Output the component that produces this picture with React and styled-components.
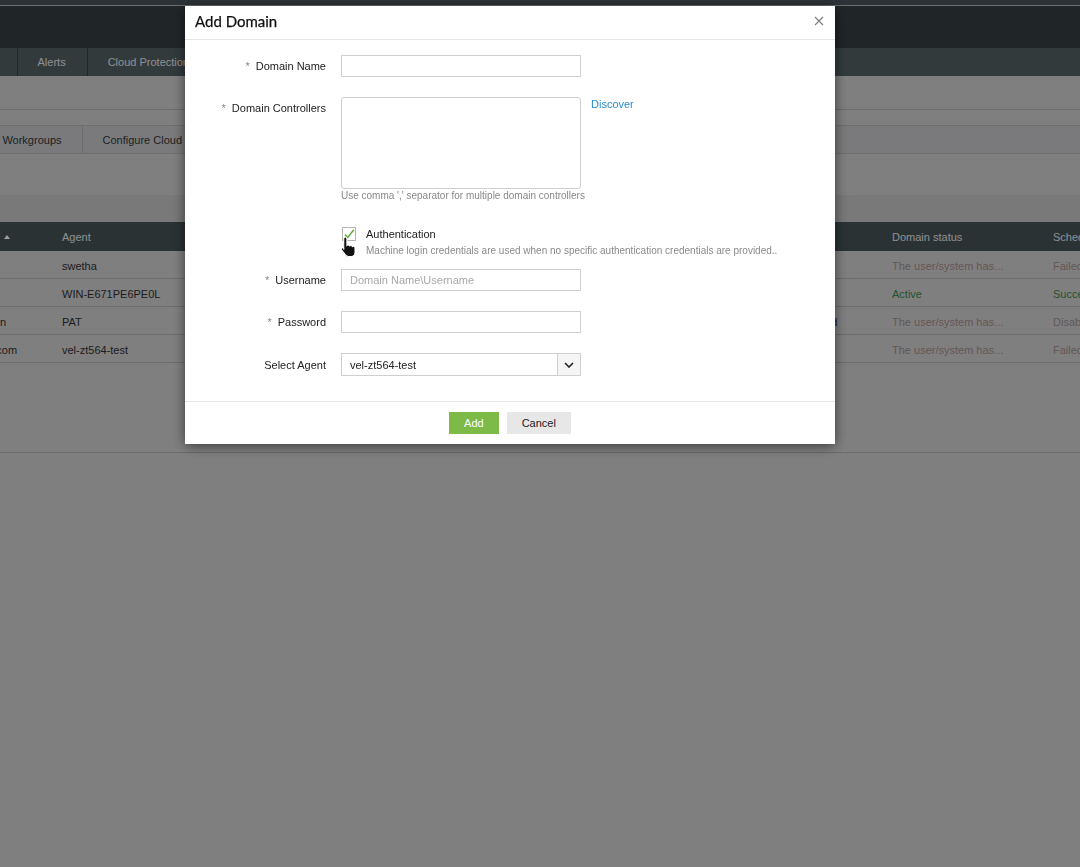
import React from 'react'
import styled, { createGlobalStyle } from 'styled-components'

const GlobalStyle = createGlobalStyle`
  html, body {
    margin: 0;
    padding: 0;
  }
  body {
    font-family: "Liberation Sans", Arial, sans-serif;
    font-size: 11px;
    color: #303030;
    background: #cecece;
    overflow: hidden;
  }
`

/* background page (scrolled sideways, so it starts off screen) */
const Page = styled.div`
  width: 1400px;
  margin-left: -130px;
  min-height: 867px;
  background: #cecece;
`
const TopStrip = styled.div`
  height: 5px;
  background: #495259;
  border-bottom: 1px solid #adb3b6;
`
const Header = styled.div`
  height: 42px;
  background: #353d42;
`
const TabBar = styled.div`
  display: flex;
  height: 28px;
  padding-left: 67px;
  background: #525e62;
`
const Tab = styled.div`
  display: flex;
  align-items: center;
  padding: 0 21px 0 20px;
  color: #e2e6e8;
  border-right: 1px solid #374145;
`
const TitleArea = styled.div`
  height: 33px;
  border-bottom: 1px solid #aeaeae;
`
const Spacer = styled.div`
  height: ${p => p.$h}px;
  background: ${p => p.$bg || 'transparent'};
`
const SubTabBar = styled.div`
  display: flex;
  height: 27px;
  padding-left: 28px;
  background: #c5c6c8;
  border-top: 1px solid #b4b4b4;
  border-bottom: 1px solid #b4b4b4;
`
const SubTab = styled.div`
  display: flex;
  align-items: center;
  padding: 0 20px;
  color: #30373a;
  border-right: 1px solid #aeaeae;
`
const Table = styled.div`
  display: grid;
  grid-template-columns: 180px 300px 190px 220px 120px 161px 160px;
`
const HeadCell = styled.div`
  display: flex;
  align-items: center;
  height: 29px;
  padding: 0 12px;
  background: #455155;
  color: #e2e6e8;
  white-space: nowrap;
  overflow: hidden;
`
const SortArrow = styled.span`
  margin-left: 11px;
  width: 0;
  height: 0;
  border-left: 3.5px solid transparent;
  border-right: 3.5px solid transparent;
  border-bottom: 4px solid #ffffff;
`
const Cell = styled.div`
  display: flex;
  align-items: center;
  height: 25px;
  padding: 2px 12px 0;
  border-bottom: 1px solid #aeaeae;
  white-space: nowrap;
  overflow: hidden;
  color: ${p => (p.$tone === 'warn' ? '#a08c8c' : p.$tone === 'ok' ? '#3a8553' : '#303030')};
`
const TableFooter = styled.div`
  height: 89px;
  border-bottom: 1px solid #aeaeae;
`

/* modal */
const Overlay = styled.div`
  position: fixed;
  inset: 0;
  background: rgba(0, 0, 0, 0.38);
`
const Dialog = styled.div`
  position: absolute;
  top: 6px;
  left: 185px;
  width: 650px;
  background: #fff;
  box-shadow: 0 2px 12px rgba(0, 0, 0, 0.55);
  color: #222;
`
const DialogHeader = styled.div`
  display: flex;
  align-items: center;
  justify-content: space-between;
  height: 30px;
  padding: 0 10px 3px;
  border-bottom: 1px solid #e6e6e6;
`
const DialogTitle = styled.div`
  font-family: Lato, "Liberation Sans", sans-serif;
  font-size: 15px;
  font-weight: 400;
  color: #111;
  -webkit-text-stroke: 0.25px #111;
`
const CloseButton = styled.button`
  display: flex;
  border: 0;
  padding: 0;
  margin-right: 1px;
  background: none;
  cursor: pointer;
`
const DialogBody = styled.div`
  padding: 15px 0 25px;
`
const FormRow = styled.div`
  display: flex;
  align-items: ${p => (p.$top ? 'flex-start' : 'center')};
  margin-bottom: ${p => p.$mb ?? 20}px;
`
const Label = styled.label`
  width: 141px;
  padding-right: 15px;
  padding-top: ${p => p.$pt || 0}px;
  text-align: right;
  line-height: 14px;
  color: #222;
`
const Star = styled.span`
  color: #888;
  margin-right: 6px;
`
const Control = styled.div`
  display: flex;
  flex-direction: column;
  width: 240px;
`
const TextInput = styled.input`
  box-sizing: border-box;
  width: 240px;
  height: 22px;
  padding: 0 8px;
  border: 1px solid #cfcfcf;
  font: inherit;
  color: #222;
  outline: none;
  &::placeholder {
    color: #a8a8a8;
  }
`
const TextArea = styled.textarea`
  box-sizing: border-box;
  width: 240px;
  height: 92px;
  border: 1px solid #cfcfcf;
  border-radius: 3px;
  resize: none;
  font: inherit;
  outline: none;
`
const Hint = styled.div`
  margin-top: 1px;
  font-size: 10px;
  line-height: 12px;
  white-space: nowrap;
  color: #888;
`
const Link = styled.a`
  margin-left: 10px;
  line-height: 14px;
  color: #2a8cd2;
  text-decoration: none;
`
const CheckWrap = styled.div`
  position: relative;
  display: flex;
  align-items: flex-start;
  margin-left: 1px;
`
const CheckBox = styled.div`
  box-sizing: border-box;
  width: 14px;
  height: 14px;
  border: 1px solid #b5b5b5;
  background: #fff;
`
const CheckText = styled.div`
  margin-left: 10px;
`
const CheckTitle = styled.div`
  line-height: 14px;
  color: #222;
`
const CheckSub = styled.div`
  margin-top: 4px;
  font-size: 10px;
  line-height: 12px;
  color: #8a8a8a;
`
const Cursor = styled.svg`
  position: absolute;
  left: -2px;
  top: 9px;
`
const Select = styled.div`
  box-sizing: border-box;
  display: flex;
  width: 240px;
  height: 23px;
  border: 1px solid #cfcfcf;
`
const SelectValue = styled.div`
  flex: 1;
  display: flex;
  align-items: center;
  padding-left: 8px;
  color: #222;
`
const SelectArrow = styled.div`
  display: flex;
  align-items: center;
  justify-content: center;
  width: 22px;
  border-left: 1px solid #cfcfcf;
  background: #f5f5f5;
`
const DialogFooter = styled.div`
  display: flex;
  justify-content: center;
  gap: 8px;
  padding: 10px;
  border-top: 1px solid #e6e6e6;
`
const Button = styled.button`
  height: 22px;
  padding: 0 15px;
  border: 0;
  font: inherit;
  color: ${p => (p.$primary ? '#fff' : '#222')};
  background: ${p => (p.$primary ? '#7dba48' : '#e7e7e7')};
  cursor: pointer;
`

const rows = [
  ['swetha.local', 'swetha', '2 hours ago', '60 Minutes', 'Failed', 'The user/system has...', 'Failed'],
  ['win-domain.local', 'WIN-E671PE6PE0L', '5 minutes ago', '60 Minutes', 'Success', 'Active', 'Success'],
  ['testlab.pat-admin-domain', 'PAT', '1 day ago', '60 Minutes', 'Unauthorized', 'The user/system has...', 'Disabled'],
  ['qa1-vel-zt564.zohotest.com', 'vel-zt564-test', '3 hours ago', '60 Minutes', 'Success', 'The user/system has...', 'Failed'],
]

function statusTone(text) {
  if (text === 'Active' || text === 'Success') return 'ok'
  if (text.startsWith('The user') || text === 'Failed' || text === 'Disabled') return 'warn'
  return undefined
}

export default function App() {
  return (
    <>
      <GlobalStyle />
      <Page>
        <TopStrip />
        <Header />
        <TabBar>
          <Tab>Reports</Tab>
          <Tab>Alerts</Tab>
          <Tab>Cloud Protection</Tab>
          <Tab>Admin</Tab>
        </TabBar>
        <TitleArea />
        <Spacer $h={15} />
        <SubTabBar>
          <SubTab>Domains</SubTab>
          <SubTab>Workgroups</SubTab>
          <SubTab>Configure Cloud Services</SubTab>
        </SubTabBar>
        <Spacer $h={41} />
        <Spacer $h={27} $bg="#c3c3c5" />
        <Table>
          <HeadCell>Domain / Forest Name<SortArrow /></HeadCell>
          <HeadCell>Agent</HeadCell>
          <HeadCell>Last Sync</HeadCell>
          <HeadCell>Interval</HeadCell>
          <HeadCell>Status</HeadCell>
          <HeadCell>Domain status</HeadCell>
          <HeadCell>Scheduler status</HeadCell>
          {rows.map((r, i) =>
            r.map((c, j) => (
              <Cell key={i + '-' + j} $tone={j >= 5 ? statusTone(c) : undefined}>{c}</Cell>
            ))
          )}
        </Table>
        <TableFooter />
      </Page>

      <Overlay>
        <Dialog>
          <DialogHeader>
            <DialogTitle>Add Domain</DialogTitle>
            <CloseButton aria-label="close">
              <svg width="10" height="10" viewBox="0 0 10 10">
                <path d="M1 1L9 9M9 1L1 9" stroke="#808080" strokeWidth="1.2" />
              </svg>
            </CloseButton>
          </DialogHeader>

          <DialogBody>
            <FormRow>
              <Label><Star>*</Star>Domain Name</Label>
              <TextInput />
            </FormRow>

            <FormRow $top $mb={25}>
              <Label $pt={4}><Star>*</Star>Domain Controllers</Label>
              <Control>
                <TextArea />
                <Hint>Use comma ',' separator for multiple domain controllers</Hint>
              </Control>
              <Link href="#">Discover</Link>
            </FormRow>

            <FormRow $top $mb={12}>
              <Label />
              <CheckWrap>
                <CheckBox>
                  <svg width="12" height="12" viewBox="0 0 12 12">
                    <path d="M2 6.5L4.8 9.4L10.8 1.8" fill="none" stroke="#5fae3e" strokeWidth="1.6" />
                  </svg>
                </CheckBox>
                <CheckText>
                  <CheckTitle>Authentication</CheckTitle>
                  <CheckSub>Machine login credentials are used when no specific authentication credentials are provided..</CheckSub>
                </CheckText>
                <Cursor width="18" height="21" viewBox="0 0 17 20">
                  <path
                    d="M5 1c.8 0 1.5.7 1.5 1.5V9c.3-.3.8-.5 1.3-.5.7 0 1.2.4 1.4.9.3-.3.7-.4 1.1-.4.7 0 1.3.5 1.4 1.1.3-.2.6-.3 1-.3.9 0 1.5.7 1.5 1.5V16c0 2-1.6 3.5-3.5 3.5H8c-1.2 0-2.2-.6-2.9-1.5L1.5 13.5c-.5-.6-.4-1.5.2-2 .6-.5 1.4-.4 1.9.1L3.5 13V2.5C3.5 1.7 4.2 1 5 1z"
                    fill="#111"
                    stroke="#fff"
                    strokeWidth="1"
                  />
                </Cursor>
              </CheckWrap>
            </FormRow>

            <FormRow>
              <Label><Star>*</Star>Username</Label>
              <TextInput placeholder="Domain Name\Username" />
            </FormRow>

            <FormRow>
              <Label><Star>*</Star>Password</Label>
              <TextInput type="password" />
            </FormRow>

            <FormRow $mb={0}>
              <Label>Select Agent</Label>
              <Select>
                <SelectValue>vel-zt564-test</SelectValue>
                <SelectArrow>
                  <svg width="10" height="6" viewBox="0 0 10 6">
                    <path d="M1 1L5 5L9 1" fill="none" stroke="#222" strokeWidth="1.6" />
                  </svg>
                </SelectArrow>
              </Select>
            </FormRow>
          </DialogBody>

          <DialogFooter>
            <Button $primary>Add</Button>
            <Button>Cancel</Button>
          </DialogFooter>
        </Dialog>
      </Overlay>
    </>
  )
}
